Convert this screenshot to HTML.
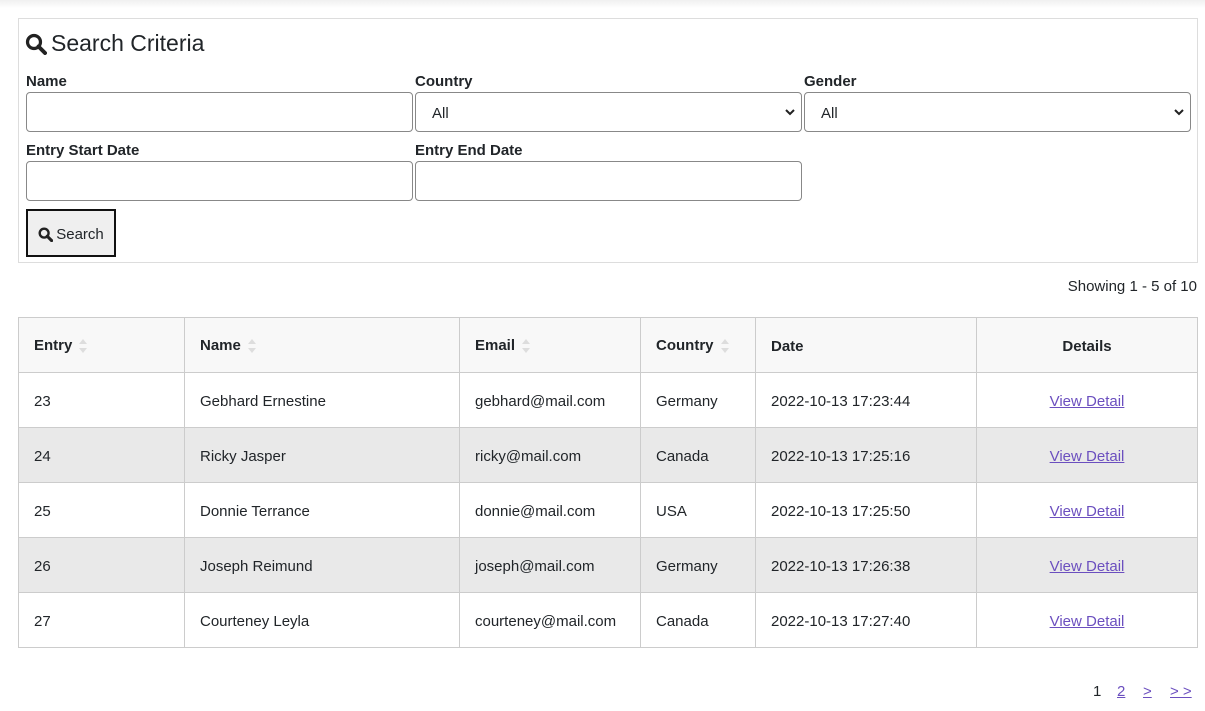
<!DOCTYPE html>
<html><head><style>
*{box-sizing:border-box}
body{margin:0;width:1205px;height:711px;background:#fff;font-family:"Liberation Sans",sans-serif;color:#212529;font-size:15px;overflow:hidden;position:relative}
.top{position:absolute;left:0;top:0;width:1205px;height:8px;background:linear-gradient(#f0f0f0,#fff)}
.panel{position:absolute;left:18px;top:18px;width:1180px;height:245px;border:1px solid #ddd}
h2{position:absolute;left:6px;top:11px;margin:0;font-weight:normal;font-size:23px;display:flex;align-items:center;gap:4px}
.lbl{position:absolute;font-weight:bold;font-size:15px}
.in{position:absolute;height:40px;width:387px;border:1px solid #888;border-radius:4px;background:#fff}
.sel{padding-left:16px;line-height:42px;font-size:15px}
.sel svg{position:absolute;right:6px;top:15px}
.btn{position:absolute;left:7px;top:190px;width:90px;height:48px;border:2px solid #111;background:#efefef;display:flex;align-items:center;justify-content:center;gap:3px;font-size:15px;padding-top:2px}
.show{position:absolute;right:8px;top:278px;font-size:15px}
table{position:absolute;left:18px;top:317px;width:1180px;border-collapse:collapse}
td,th{border:1px solid #ccc;height:55px;padding:2px 15px 0;text-align:left;font-size:15px}
th{background:#f8f8f8}
tr.g td{background:#e9e9e9}
a{color:#6b4fbf;text-decoration:underline}
.c{text-align:center}
.sort{display:inline-block;vertical-align:middle;margin-left:6px}
.pg{position:absolute;top:683px;font-size:15px}
</style></head><body>
<div class="top"></div>
<div class="panel">
<h2><svg width="22" height="22" viewBox="0 0 22 22"><circle cx="9" cy="9" r="6.5" fill="none" stroke="#222" stroke-width="3.2"/><path d="M13.5 13.5L20 20" stroke="#222" stroke-width="4" stroke-linecap="round"/></svg>Search Criteria</h2>
<div class="lbl" style="left:7px;top:54px">Name</div>
<div class="lbl" style="left:396px;top:54px">Country</div>
<div class="lbl" style="left:785px;top:54px">Gender</div>
<div class="in" style="left:7px;top:73px"></div>
<div class="in sel" style="left:396px;top:73px">All<svg width="10" height="8" viewBox="0 0 10 8"><path d="M1 2l4 4 4-4" fill="none" stroke="#222" stroke-width="2"/></svg></div>
<div class="in sel" style="left:785px;top:73px">All<svg width="10" height="8" viewBox="0 0 10 8"><path d="M1 2l4 4 4-4" fill="none" stroke="#222" stroke-width="2"/></svg></div>
<div class="lbl" style="left:7px;top:123px">Entry Start Date</div>
<div class="lbl" style="left:396px;top:123px">Entry End Date</div>
<div class="in" style="left:7px;top:142px"></div>
<div class="in" style="left:396px;top:142px"></div>
<div class="btn"><svg width="15" height="15" viewBox="0 0 22 22"><circle cx="9" cy="9" r="6.5" fill="none" stroke="#222" stroke-width="3.5"/><path d="M13.5 13.5L20 20" stroke="#222" stroke-width="4.5" stroke-linecap="round"/></svg>Search</div>
</div>
<div class="show">Showing 1 - 5 of 10</div>
<table>
<tr><th style="width:166px">Entry<svg class="sort" width="10" height="18" viewBox="0 0 10 18"><path d="M1 7l4-5 4 5zM1 11l4 5 4-5z" fill="#ddd"/></svg></th><th style="width:275px">Name<svg class="sort" width="10" height="18" viewBox="0 0 10 18"><path d="M1 7l4-5 4 5zM1 11l4 5 4-5z" fill="#ddd"/></svg></th><th style="width:181px">Email<svg class="sort" width="10" height="18" viewBox="0 0 10 18"><path d="M1 7l4-5 4 5zM1 11l4 5 4-5z" fill="#ddd"/></svg></th><th style="width:115px">Country<svg class="sort" width="10" height="18" viewBox="0 0 10 18"><path d="M1 7l4-5 4 5zM1 11l4 5 4-5z" fill="#ddd"/></svg></th><th style="width:221px">Date</th><th class="c">Details</th></tr>
<tr><td>23</td><td>Gebhard Ernestine</td><td>gebhard@mail.com</td><td>Germany</td><td>2022-10-13 17:23:44</td><td class="c"><a>View Detail</a></td></tr>
<tr class="g"><td>24</td><td>Ricky Jasper</td><td>ricky@mail.com</td><td>Canada</td><td>2022-10-13 17:25:16</td><td class="c"><a>View Detail</a></td></tr>
<tr><td>25</td><td>Donnie Terrance</td><td>donnie@mail.com</td><td>USA</td><td>2022-10-13 17:25:50</td><td class="c"><a>View Detail</a></td></tr>
<tr class="g"><td>26</td><td>Joseph Reimund</td><td>joseph@mail.com</td><td>Germany</td><td>2022-10-13 17:26:38</td><td class="c"><a>View Detail</a></td></tr>
<tr><td>27</td><td>Courteney Leyla</td><td>courteney@mail.com</td><td>Canada</td><td>2022-10-13 17:27:40</td><td class="c"><a>View Detail</a></td></tr>
</table>
<div class="pg" style="left:1093px">1</div>
<div class="pg" style="left:1117px"><a>2</a></div>
<div class="pg" style="left:1143px"><a>&gt;</a></div>
<div class="pg" style="left:1170px"><a>&gt; &gt;</a></div>
</body></html>
